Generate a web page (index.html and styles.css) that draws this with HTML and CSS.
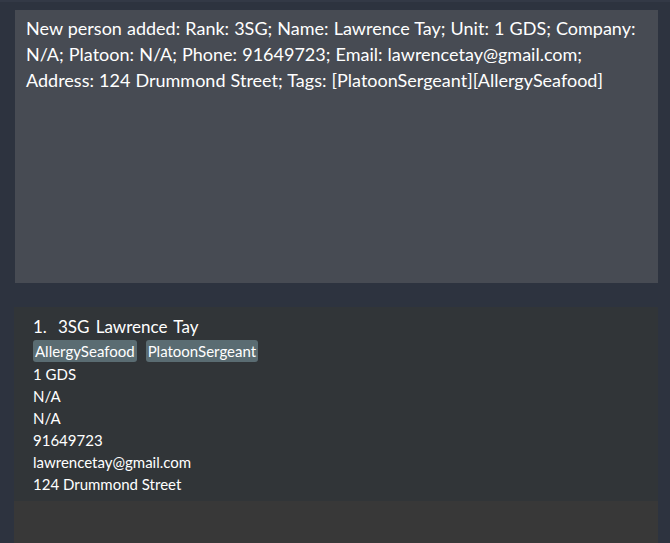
FILE: index.html
```html
<!DOCTYPE html>
<html>
<head>
<meta charset="utf-8">
<link rel="stylesheet" href="styles.css">
</head>
<body>
<div class="app">
  <div class="result">New person added: Rank: 3SG; Name: Lawrence Tay; Unit: 1 GDS; Company: N/A; Platoon: N/A; Phone: 91649723; Email: lawrencetay@gmail.com; Address: 124 Drummond Street; Tags: [PlatoonSergeant][AllergySeafood]</div>
  <div class="list">
    <div class="card">
      <div class="name"><span class="idx">1.</span><span>3SG Lawrence Tay</span></div>
      <div class="tags"><span class="tag">AllergySeafood</span><span class="tag">PlatoonSergeant</span></div>
      <div class="field">1 GDS</div>
      <div class="field">N/A</div>
      <div class="field">N/A</div>
      <div class="field">91649723</div>
      <div class="field">lawrencetay@gmail.com</div>
      <div class="field">124 Drummond Street</div>
    </div>
    <div class="empty"></div>
  </div>
</div>
</body>
</html>
```
FILE: styles.css
```css
html, body {
  margin: 0;
  padding: 0;
  background: #2d333f;
  height: 100%;
  overflow: hidden;
}
body {
  border-top: 2px solid #333946;
  box-sizing: border-box;
}
.app {
  font-family: Lato, "Open Sans", sans-serif;
  color: #ffffff;
  padding: 8px 12px 0 15px;
  display: flex;
  flex-direction: column;
  gap: 24px;
}
.result {
  background: #474b53;
  height: 273px;
  box-sizing: border-box;
  padding: 5px 12px 0 11px;
  font-size: 18px;
  line-height: 26px;
  word-spacing: 0.5px;
}
.list {
  margin-left: -1px;
  display: flex;
  flex-direction: column;
}
.card {
  background: #313538;
  padding: 10px 0 6px 19px;
  height: 194px;
  box-sizing: border-box;
}
.name {
  font-size: 17px;
  line-height: 20px;
  color: #ffffff;
  word-spacing: 2px;
}
.idx {
  margin-right: 11px;
}
.tags {
  display: flex;
  gap: 9px;
  margin-top: 3px;
  margin-bottom: 1px;
}
.tag {
  background: #5a6c72;
  border-radius: 3px;
  font-size: 15px;
  line-height: 22px;
  padding: 0 2px;
  color: #ffffff;
}
.field {
  font-size: 15px;
  line-height: 22px;
  color: #ffffff;
}
.empty {
  background: #383838;
  height: 60px;
}
```
